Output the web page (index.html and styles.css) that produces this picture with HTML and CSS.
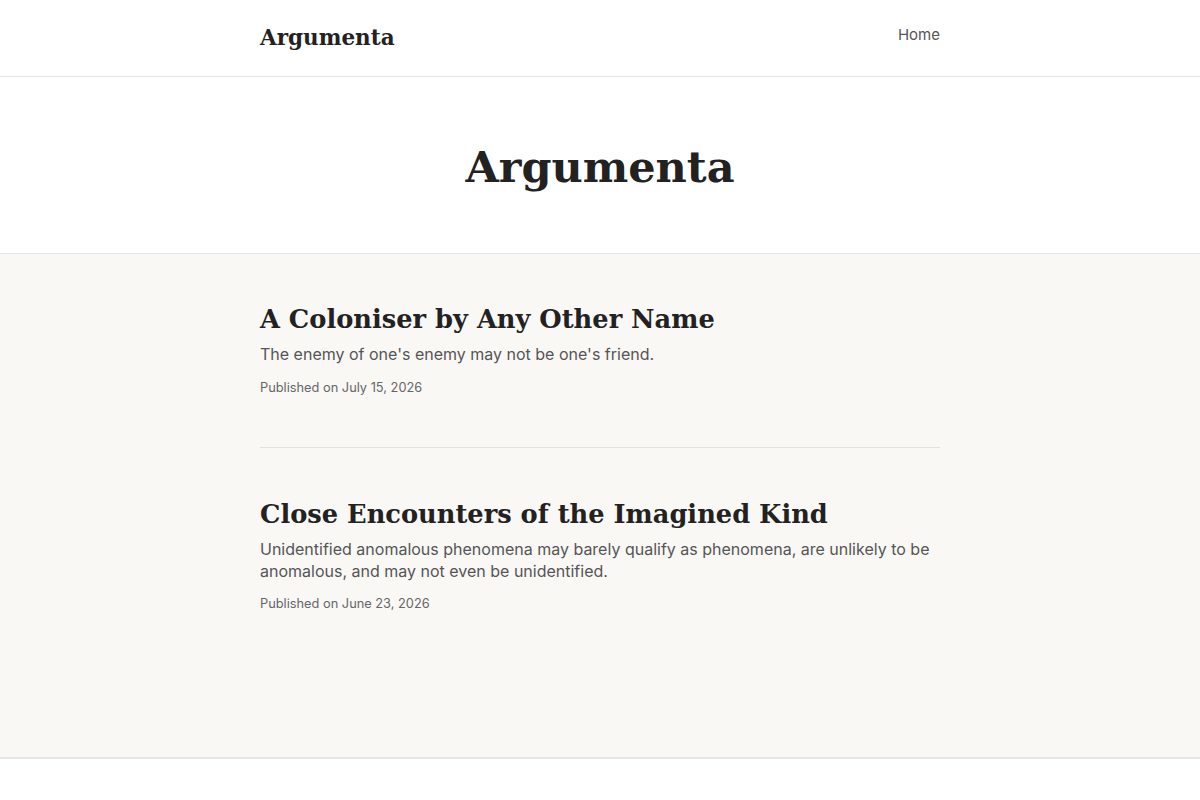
FILE: index.html
```html
<!DOCTYPE html>
<html lang="en">
<head>
<meta charset="utf-8">
<title>Argumenta</title>
<link rel="stylesheet" href="styles.css">
</head>
<body>
<header class="site-header">
  <div class="container header-inner">
    <a class="logo" href="#">Argumenta</a>
    <nav class="nav"><a href="#">Home</a></nav>
  </div>
</header>
<section class="hero">
  <h1 class="hero-title">Argumenta</h1>
</section>
<main class="main">
  <div class="container">
    <article class="post">
      <h2 class="post-title">A Coloniser by Any Other Name</h2>
      <p class="post-sub">The enemy of one's enemy may not be one's friend.</p>
      <p class="post-date">Published on July 15, 2026</p>
    </article>
    <article class="post">
      <h2 class="post-title">Close Encounters of the Imagined Kind</h2>
      <p class="post-sub">Unidentified anomalous phenomena may barely qualify as phenomena, are unlikely to be anomalous, and may not even be unidentified.</p>
      <p class="post-date">Published on June 23, 2026</p>
    </article>
  </div>
</main>
<footer class="footer"></footer>
</body>
</html>
```
FILE: styles.css
```css
* { box-sizing: border-box; }
html, body { margin: 0; padding: 0; }
body {
  font-family: "Inter", "Liberation Sans", sans-serif;
  color: #222;
  background: #fff;
}
a { text-decoration: none; color: inherit; }
.container { width: 680px; margin: 0 auto; }
.site-header { height: 77px; border-bottom: 1px solid #e6e6e6; }
.header-inner { display: flex; justify-content: space-between; align-items: flex-start; padding-top: 24px; }
.logo {
  font-family: "DejaVu Serif", "Liberation Serif", serif;
  font-weight: 700; font-size: 21.5px; color: #222; line-height: 28px;
}
.nav a { font-size: 15px; color: #555; line-height: 22px; }
.hero { height: 177px; padding-top: 6px; border-bottom: 1px solid #e6e6e6; display: flex; align-items: center; justify-content: center; }
.hero-title {
  margin: 0; font-family: "DejaVu Serif", "Liberation Serif", serif;
  font-weight: 700; font-size: 43px; color: #222; line-height: 1.2;
}
.main { background: #f9f8f5; min-height: 505px; border-bottom: 2px solid #e6e6e6; }
.main .container { padding-top: 47px; }
.post { padding: 0 0 49px; }
.post + .post { border-top: 1px solid #e4e2dd; padding-top: 48px; }
.post-title {
  margin: 0; font-family: "DejaVu Serif", "Liberation Serif", serif;
  font-weight: 700; font-size: 25.7px; line-height: 36px; color: #222;
}
.post-sub { margin: 6px 0 0; font-size: 16px; line-height: 22px; color: #555; }
.post-date { margin: 12.5px 0 0; font-size: 12.8px; color: #666; line-height: 20px; }
.footer { height: 41px; }
```
